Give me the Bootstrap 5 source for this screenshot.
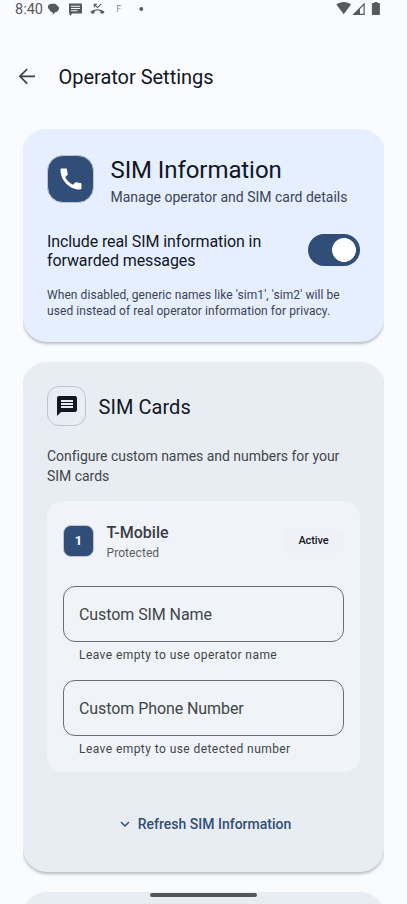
<!DOCTYPE html>
<html lang="en">
<head>
<meta charset="utf-8">
<meta name="viewport" content="width=device-width, initial-scale=1">
<title>Operator Settings</title>
<link href="https://cdn.jsdelivr.net/npm/bootstrap@5.3.0/dist/css/bootstrap.min.css" rel="stylesheet">
<style>
:root{--navy:#304e77;--ink:#12161f}
html,body{height:904px;overflow:hidden}
body{background:#fafbff;font-family:Roboto,sans-serif;color:var(--ink);font-size:14px}
.screen{height:904px;overflow:hidden;position:relative}
svg{display:block;flex:none}
.status{height:18px;color:#58595c;padding:0 26px 0 15px}
.clock{font-size:14.5px;line-height:18px;width:29px;padding-top:1px}
.topbar{height:111px;padding:7px 0 0 17px}
.topbar .back{margin-top:41px}
.topbar h1{font-size:20px;line-height:28px;font-weight:400;margin:38px 0 0 21.500px;letter-spacing:-.02px}
.panes{padding:0 23px;overflow:hidden}
.pane{border:0;border-radius:24px;padding:24px;box-shadow:0 2px 3px rgba(0,0,0,.25);clip-path:inset(-4px 0 -8px 0)}
.pane-sky{background:#e5efff;height:213px}
.pane-mist{background:#e8edf4;height:510px;margin-top:20px}
.tile{display:flex;align-items:center;justify-content:center;flex:none;border:1px solid #c2c1cc}
.tile-lg{width:47px;height:48px;border-radius:16px;background:var(--navy);margin:2px .5px 0 0}
.tile-md{width:39px;height:40px;border-radius:12px;margin-right:.5px}
.tile-sm{width:31px;height:32px;border-radius:8px;background:var(--navy);color:#fff;font-size:13px;font-weight:700;margin-right:.5px}
.t-head{font-size:24px;line-height:32px;letter-spacing:-.08px;padding-top:1px}
.t-sub{font-size:14px;line-height:20px;color:#3b4453;margin-top:1px}
.t-opt{font-size:16px;line-height:19px;letter-spacing:-.1px;padding-top:2px}
.t-note{font-size:12px;line-height:16px;color:#3b4453;letter-spacing:.07px;white-space:nowrap;margin-top:17px}
.form-switch .form-check-input.toggle{width:52px;height:32px;margin:0;float:none;border:0;background-color:var(--navy);background-image:radial-gradient(circle at 36px 16px,#fff 11.6px,transparent 12.2px);background-position:0 0;background-size:100% 100%}
.t-title{font-size:20px;line-height:28px;letter-spacing:.05px;padding-top:1px;margin-left:12px}
.t-desc{font-size:14px;line-height:20px;color:#424549;letter-spacing:-.03px;margin-top:20px}
.inner{background:#f0f3f8;border:0;border-radius:16px;height:271px;padding:16px;margin-top:15px}
.inner>*{flex:none}
.sim-row{height:48px}
.sim-name{font-size:16px;line-height:22px;color:#393c42;font-weight:500;padding-top:2px}
.sim-state{font-size:12px;line-height:18px;color:#5b5e64;letter-spacing:.08px}
.chip{width:61px;height:24px;border-radius:8px;background:#eff1f6;font-size:11px;font-weight:500;letter-spacing:-.1px;padding-top:1px}
.field{height:56px;border:1px solid #6b6e74;border-radius:12px;padding:2px 15px 0;font-size:16px;color:#424549;letter-spacing:-.08px}
.help{font-size:12px;line-height:16px;padding:5px 16px 0;color:#424549;letter-spacing:.43px;height:38px}
.refresh{color:var(--navy);font-size:14px;font-weight:500;line-height:20px;padding:0 0 0 4px;border:0;margin-top:42px}
.homebar{position:absolute;left:150px;top:893px;width:107px;height:4px;border-radius:2px;background:#55565a}
</style>
</head>
<body>
<div class="screen">
  <div class="status d-flex align-items-center">
    <span class="clock">8:40</span>
    <svg width="110" height="18" viewBox="0 0 110 18" fill="currentColor">
      <path d="M4 6.2C4.800 4.200 7 3.400 9 4c1.200-.4 3 0 3.800 1.300 1.700.7 2.400 2 2.200 3.500-.3 2.200-2.200 3.500-4.200 3.600L8.800 15v-2.500C7 12 5.800 11 5.400 9.500 4.200 8.700 3.700 7.500 4 6.200z"/>
      <path fill-rule="evenodd" d="M25 3.500h13v10H28.200L26 16 25.500 13.500H25zM27 5.800v1h9V5.800zM27 8v1h9V8zM27 10.200v1h6.500v-1z"/>
      <path d="M53.500 9.200c-2.700 0-5.200 1-7.100 2.600l1.800 2.300 2.500-1.400v-1.800c1.700-.6 3.900-.6 5.600 0v1.800l2.500 1.400 1.800-2.300c-1.900-1.600-4.400-2.600-7.100-2.600z"/>
      <path d="M50.300 7.300V4.400h2.500M50.500 4.600l3 3 3.800-3.700" fill="none" stroke="currentColor" stroke-width="1.100"/>
      <text x="72.500" y="12.300" font-size="8.500" font-family="Roboto" fill="#85868a">F</text>
      <circle cx="97.300" cy="9" r="1.900"/>
    </svg>
    <svg class="ms-auto" width="46" height="18" viewBox="0 0 46 18" fill="currentColor">
      <path d="M1.300 4.600C5.500 1.200 12 1.200 16 4.600L8.700 14.300z"/>
      <path d="M17.300 15 29.700 2.600V15z"/><path d="M25 9v4.800h3.500V5.500z" fill="#fafbff"/>
      <path d="M37.700 3h1.800V2h3v1h1.600q.8 0 .8.800v10.400q0 .8-.8.800h-6.400q-.8 0-.8-.8V3.800q0-.8.800-.8z"/>
    </svg>
  </div>
  <header class="topbar d-flex align-items-start">
    <svg class="back" width="20" height="20" viewBox="0 0 20 20" fill="none" stroke="#3d3f44" stroke-width="1.700"><path d="M18 10.300H3.300M10.200 3 2.900 10.300l7.300 7.300"/></svg>
    <h1>Operator Settings</h1>
  </header>
  <main class="panes d-flex flex-column">
    <section class="card pane pane-sky">
      <div class="d-flex">
        <span class="tile tile-lg"><svg width="28" height="28" viewBox="0 0 24 24" fill="#fff"><path d="M20.010 15.380c-1.230 0-2.420-.2-3.530-.56-.35-.12-.74-.03-1.010.24l-1.570 1.970c-2.830-1.350-5.480-3.900-6.890-6.830l1.950-1.660c.27-.28.35-.67.24-1.020-.37-1.110-.56-2.300-.56-3.530 0-.54-.45-.99-.99-.99H4.190C3.650 3 3 3.240 3 3.990 3 13.280 10.730 21 20.010 21c.71 0 .99-.63.99-1.180v-3.450c0-.54-.45-.99-.99-.99z"/></svg></span>
        <div class="ms-3">
          <div class="t-head">SIM Information</div>
          <div class="t-sub">Manage operator and SIM card details</div>
        </div>
      </div>
      <div class="d-flex justify-content-between align-items-center" style="margin-top:23px">
        <label class="t-opt" for="sim">Include real SIM information in<br>forwarded messages</label>
        <div class="form-check form-switch p-0 m-0 lh-1" style="min-height:0"><input class="form-check-input toggle d-block" type="checkbox" role="switch" id="sim" checked></div>
      </div>
      <div class="t-note">When disabled, generic names like 'sim1', 'sim2' will be<br>used instead of real operator information for privacy.</div>
    </section>
    <section class="card pane pane-mist">
      <div class="d-flex align-items-center">
        <span class="tile tile-md"><svg width="24" height="24" viewBox="0 0 24 24" fill="#12161f"><path d="M20 2H4c-1.100 0-1.990.9-1.990 2L2 22l4-4h14c1.100 0 2-.9 2-2V4c0-1.100-.9-2-2-2zm-2 12H6v-2h12v2zm0-3H6V9h12v2zm0-3H6V6h12v2z"/></svg></span>
        <div class="t-title">SIM Cards</div>
      </div>
      <div class="t-desc">Configure custom names and numbers for your<br>SIM cards</div>
      <div class="card inner">
        <div class="sim-row d-flex align-items-center">
          <span class="tile tile-sm">1</span>
          <div style="margin-left:12px">
            <div class="sim-name">T-Mobile</div>
            <div class="sim-state">Protected</div>
          </div>
          <span class="chip ms-auto d-flex align-items-center justify-content-center">Active</span>
        </div>
        <div class="field d-flex align-items-center" style="margin-top:21px">Custom SIM Name</div>
        <div class="help">Leave empty to use operator name</div>
        <div class="field d-flex align-items-center">Custom Phone Number</div>
        <div class="help">Leave empty to use detected number</div>
      </div>
      <button class="btn refresh d-flex align-items-center justify-content-center">
        <svg width="10" height="10" viewBox="0 0 10 10" fill="none" stroke="currentColor" stroke-width="1.500" style="margin-right:8px"><path d="m1 3 4 4 4-4"/></svg>Refresh SIM Information
      </button>
    </section>
    <section class="card pane pane-mist"></section>
  </main>
  <div class="homebar"></div>
</div>
<script src="https://cdn.jsdelivr.net/npm/bootstrap@5.3.0/dist/js/bootstrap.bundle.min.js"></script>
</body>
</html>
